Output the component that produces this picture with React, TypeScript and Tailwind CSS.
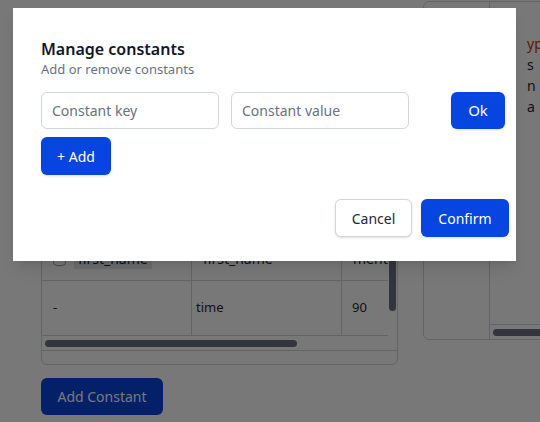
import React from 'react';

const font = { fontFamily: '"Noto Sans", "Open Sans", sans-serif' };

export default function App() {
    return (
        <div className="relative w-[540px] h-[422px] overflow-hidden bg-white text-gray-800" style={font}>
            {/* Page behind the dialog */}
            <div className="flex gap-[25px] pl-[41px] pt-[1px]">
                <div className="flex flex-col w-[357px] shrink-0">
                    <div className="h-[228px]" />
                    <div className="border border-gray-300 rounded-md h-[136px] flex flex-col overflow-hidden">
                        <div className="flex flex-1">
                            <div className="flex-1 flex flex-col">
                                <div className="flex h-[51px] border-b border-gray-300 text-sm">
                                    <div className="w-[150px] border-r border-gray-300 flex items-center gap-2 pl-[11px] pt-[8px]">
                                        <span className="w-[13px] h-[13px] border border-gray-400 rounded-sm bg-white" />
                                        <span className="px-1 bg-gray-200">first_name</span>
                                    </div>
                                    <div className="w-[150px] border-r border-gray-300 flex items-center pl-[11px] pt-[8px]">first_name</div>
                                    <div className="flex-1 flex items-center pl-[11px] pt-[8px] overflow-hidden">ment</div>
                                </div>
                                <div className="flex h-[55px] border-b border-gray-300 text-[13px]">
                                    <div className="w-[150px] border-r border-gray-300 flex items-center pl-[11px]">-</div>
                                    <div className="w-[150px] border-r border-gray-300 flex items-center pl-[4px]">time</div>
                                    <div className="flex-1 flex items-center pl-[10px]">90</div>
                                </div>
                                <div className="h-[14px] flex items-center pl-[3px]">
                                    <div className="w-[252px] h-[7px] rounded-full bg-gray-500" />
                                </div>
                            </div>
                            <div className="w-[15px] flex justify-center pt-[21px]">
                                <div className="w-[7px] h-[60px] rounded-full bg-gray-500" />
                            </div>
                        </div>
                        <div className="h-[15px] border-t border-gray-300" />
                    </div>
                    <button className="mt-[13px] w-[122px] h-[37px] rounded-md bg-[#0745e0] text-white text-[14px]">Add Constant</button>
                </div>
                <div className="w-[140px] shrink-0 h-[339px] border border-gray-300 rounded-md flex overflow-hidden">
                    <div className="w-[66px] shrink-0 border-r border-gray-300" />
                    <div className="flex-1 flex flex-col">
                        <div className="flex-1 border-b border-gray-300 pl-[37px] pt-[31px] text-[14px] leading-[21px] overflow-hidden whitespace-nowrap">
                            <div className="text-orange-700">yp</div>
                            <div>s</div>
                            <div>n</div>
                            <div>a</div>
                        </div>
                        <div className="h-[14px] flex items-center pl-[3px]">
                            <div className="w-[60px] h-[7px] rounded-full bg-gray-500" />
                        </div>
                    </div>
                </div>
            </div>

            {/* Overlay */}
            <div className="absolute inset-0 bg-black/[0.53]" />

            {/* Dialog */}
            <div className="absolute left-[13px] top-[8px] w-[503px] h-[253px] bg-white shadow-lg pt-[30px] px-[28px]">
                <h2 className="text-[16px] font-semibold text-gray-900 leading-[22px]">Manage constants</h2>
                <p className="text-[13px] text-gray-500 leading-[18px]">Add or remove constants</p>

                <div className="flex items-center mt-[14px]">
                    <input
                        placeholder="Constant key"
                        className="w-[178px] h-[37px] rounded-md border border-gray-300 px-[10px] text-[14px] placeholder:text-gray-500 outline-none"
                    />
                    <input
                        placeholder="Constant value"
                        className="ml-[12px] w-[178px] h-[37px] rounded-md border border-gray-300 px-[10px] text-[14px] placeholder:text-gray-500 outline-none"
                    />
                    <button className="ml-auto mr-[-17px] w-[54px] h-[37px] rounded-md bg-[#0745e0] text-white text-[15px] shadow-sm">Ok</button>
                </div>

                <button className="mt-[8px] w-[70px] h-[38px] rounded-md bg-[#0745e0] text-white text-[14px] shadow-sm">+ Add</button>

                <div className="flex justify-end gap-[9px] mt-[24px] mr-[-21px]">
                    <button className="w-[77px] h-[38px] rounded-md border border-gray-300 bg-white text-gray-800 text-[14px] shadow-sm">Cancel</button>
                    <button className="w-[88px] h-[38px] rounded-md bg-[#0745e0] text-white text-[14px] shadow-sm">Confirm</button>
                </div>
            </div>
        </div>
    );
}
